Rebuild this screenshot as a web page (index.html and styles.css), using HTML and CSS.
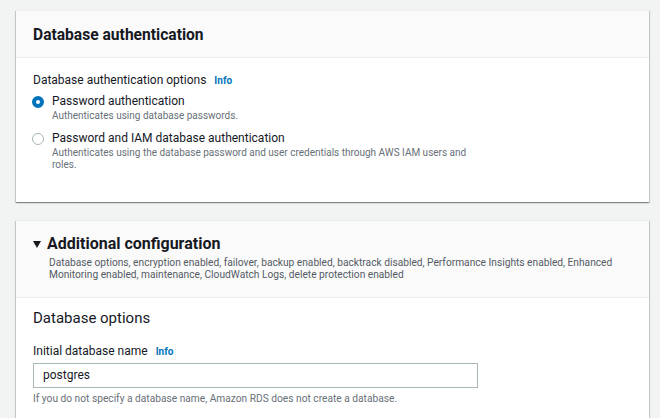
FILE: index.html
```html
<!DOCTYPE html>
<html>
<head>
<meta charset="utf-8">
<link rel="stylesheet" href="styles.css">
</head>
<body>
<div class="page">
  <section class="card">
    <div class="card-header">
      <h2 class="card-title">Database authentication</h2>
    </div>
    <div class="card-body auth-body">
      <div class="field-label">Database authentication options <a class="info">Info</a></div>
      <div class="radio-group">
        <div class="radio-row">
          <span class="radio checked"></span>
          <div class="radio-text">
            <div class="radio-label">Password authentication</div>
            <div class="radio-desc">Authenticates using database passwords.</div>
          </div>
        </div>
        <div class="radio-row">
          <span class="radio"></span>
          <div class="radio-text">
            <div class="radio-label">Password and IAM database authentication</div>
            <div class="radio-desc narrow">Authenticates using the database password and user credentials through AWS IAM users and roles.</div>
          </div>
        </div>
      </div>
    </div>
  </section>

  <section class="card card-2">
    <div class="card-header expand-header">
      <div class="expand-title-row">
        <span class="caret"></span>
        <h2 class="card-title big">Additional configuration</h2>
      </div>
      <div class="expand-desc">Database options, encryption enabled, failover, backup enabled, backtrack disabled, Performance Insights enabled, Enhanced Monitoring enabled, maintenance, CloudWatch Logs, delete protection enabled</div>
    </div>
    <div class="card-body options-body">
      <h3 class="sub-title">Database options</h3>
      <div class="field-label">Initial database name <a class="info">Info</a></div>
      <div class="input">postgres</div>
      <div class="hint">If you do not specify a database name, Amazon RDS does not create a database.</div>
    </div>
  </section>
</div>
</body>
</html>
```

FILE: styles.css
```css
* { box-sizing: border-box; }
html, body {
  margin: 0;
  padding: 0;
  background: #f2f3f3;
  font-family: Roboto, "Liberation Sans", sans-serif;
  color: #16191f;
  overflow: hidden;
}
.page {
  padding: 10px 11px 0 16px;
  display: flex;
  flex-direction: column;
  gap: 18px;
}
.card {
  background: #fff;
  border-top: 1px solid #eaeded;
  box-shadow: 0 1px 1px 0 rgba(0,28,36,0.3), 1px 1px 1px 0 rgba(0,28,36,0.15), -1px 1px 1px 0 rgba(0,28,36,0.15);
}
.card-header {
  background: #fafafa;
  border-bottom: 1px solid #eaeded;
  padding: 1px 17px 0;
  height: 47px;
  display: flex;
  align-items: center;
}
.card-title {
  margin: 0;
  font-size: 15.6px;
  font-weight: 700;
  line-height: 20px;
}
.card-title.big { font-size: 16px; }
.card-body {
  padding: 14px 17px 0;
}
.auth-body {
  height: 144px;
}
.field-label {
  font-size: 12px;
  line-height: 16px;
  display: flex;
  align-items: baseline;
  gap: 8px;
}
.info {
  color: #0073bb;
  font-weight: 700;
  font-size: 10px;
}
.radio-group {
  margin-top: 4px;
  display: flex;
  flex-direction: column;
  gap: 8px;
}
.radio-row {
  display: flex;
  gap: 8px;
}
.radio {
  width: 12px;
  height: 12px;
  border-radius: 50%;
  border: 1px solid #aab7b8;
  margin-top: 3px;
  flex: none;
  margin-left: -1px;
}
.radio.checked {
  border: 4px solid #0073bb;
  background: #fff;
}
.radio-text { display: flex; flex-direction: column; }
.radio-label {
  font-size: 12px;
  line-height: 17px;
}
.radio-desc {
  font-size: 10px;
  line-height: 12px;
  color: #687078;
}
.radio-desc.narrow { max-width: 430px; }
.card-2 { flex: 1; }
.expand-header {
  height: auto;
  display: block;
  padding: 13px 17px 16px;
}
.expand-title-row {
  display: flex;
  align-items: center;
  gap: 6px;
}
.caret {
  width: 0;
  height: 0;
  border-left: 4.5px solid transparent;
  border-right: 4.5px solid transparent;
  border-top: 7px solid #16191f;
  margin-top: 1px;
}
.expand-desc {
  margin-top: 3px;
  margin-left: 16px;
  font-size: 10.2px;
  line-height: 12px;
  color: #545b64;
  max-width: 590px;
}
.options-body {
  padding: 10px 17px 20px;
}
.sub-title {
  margin: 0;
  font-size: 15px;
  font-weight: 400;
  line-height: 20px;
}
.options-body .field-label { margin-top: 15px; }
.input {
  margin-top: 3px;
  width: 445px;
  height: 25px;
  border: 1px solid #aab7b8;
  padding: 0 9px;
  font-size: 12px;
  line-height: 23px;
}
.hint {
  margin-top: 4px;
  font-size: 10.2px;
  line-height: 14px;
  color: #687078;
}
```
